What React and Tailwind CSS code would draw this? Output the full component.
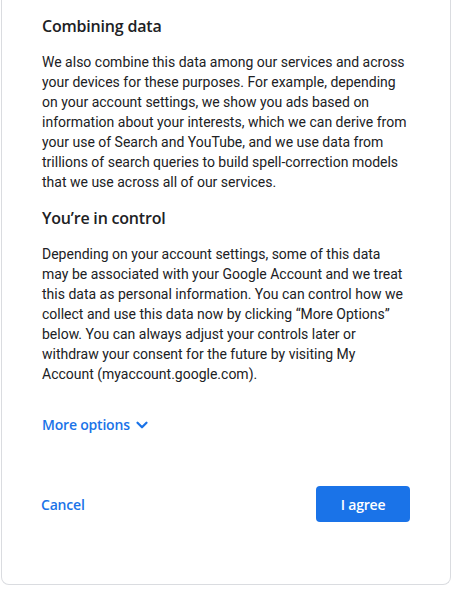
const heading = { fontFamily: '"Open Sans", Roboto, sans-serif' };

const ConsentCard = () => {
  return (
    <div className="ml-[1px] w-[450px] rounded-b-lg border border-t-0 border-[#dadce0] bg-white px-10 pt-[14px] pb-[62px] font-['Roboto',sans-serif] text-[#202124]">
      <h2 className="text-[16px] leading-6 font-semibold tracking-[-0.2px]" style={heading}>Combining data</h2>
      <p className="mt-[14px] text-[14px] leading-5">
        We also combine this data among our services and across your devices for these purposes. For example, depending on your account settings, we show you ads based on information about your interests, which we can derive from your use of Search and YouTube, and we use data from trillions of search queries to build spell-correction models that we use across all of our services.
      </p>
      <h2 className="mt-[14px] text-[16px] leading-6 font-semibold tracking-[-0.2px]" style={heading}>You’re in control</h2>
      <p className="mt-[14px] text-[14px] leading-5">
        Depending on your account settings, some of this data may be associated with your Google Account and we treat this data as personal information. You can control how we collect and use this data now by clicking “More Options” below. You can always adjust your controls later or withdraw your consent for the future by visiting My Account (myaccount.google.com).
      </p>
      <button className="mt-[31px] flex items-center gap-[3px] text-[14px] leading-5 font-semibold tracking-[-0.2px] text-[#1a73e8]" style={heading}>
        More options
        <svg width="18" height="18" viewBox="0 0 24 24" fill="none" stroke="currentColor" strokeWidth="3" strokeLinecap="round" strokeLinejoin="round">
          <path d="M6 9l6 6 6-6" />
        </svg>
      </button>
      <div className="mt-[51px] flex items-center justify-between">
        <button className="-ml-[1px] text-[14px] font-semibold tracking-[-0.2px] text-[#1a73e8]" style={heading}>Cancel</button>
        <button className="h-9 w-[94px] rounded bg-[#1a73e8] text-[14px] font-semibold tracking-[-0.2px] text-white" style={heading}>I agree</button>
      </div>
    </div>
  );
};

export default function App() {
  return (
    <div className="min-h-[596px] bg-white">
      <ConsentCard />
    </div>
  );
}
